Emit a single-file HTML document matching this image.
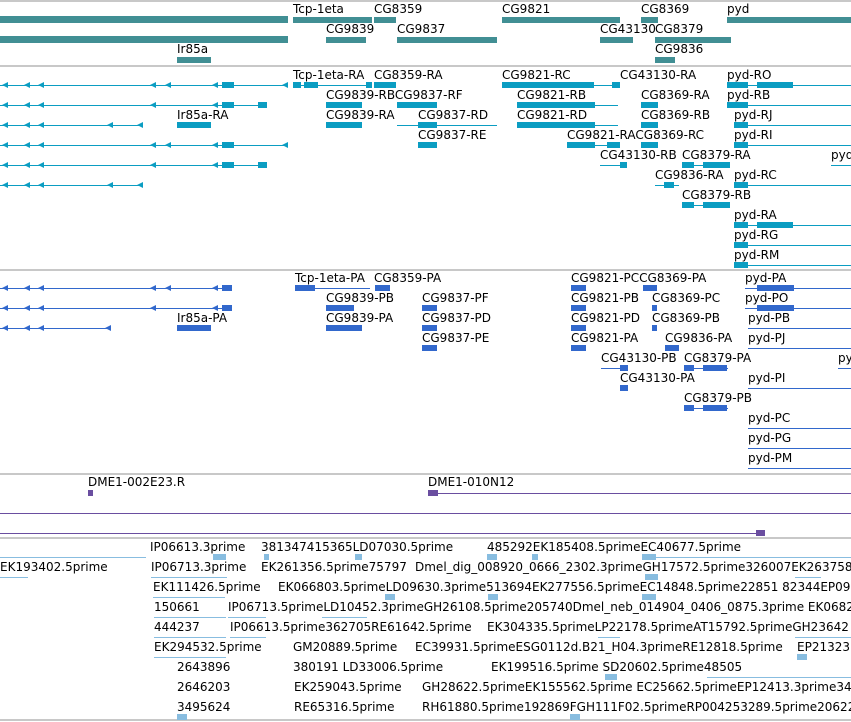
<!DOCTYPE html>
<html><head><meta charset="utf-8"><style>
body{margin:0;width:851px;height:722px;overflow:hidden;background:#fff;position:relative;font-family:"DejaVu Sans","Liberation Sans",sans-serif;}
div{position:absolute}
.t{font-size:12px;line-height:12px;white-space:pre;color:#000}
.g{background:#c8c8c8;height:2px;left:0;width:851px}
.G{background:#418f94}
.R{background:#0b9dc2}
.P{background:#3268cc}
.C{background:#6a4ea0}
.E{background:#88bde0}
.l{height:1px}
.b{height:6px}
.k{height:8px}
.a{width:0;height:0;border-top:3px solid transparent;border-bottom:3px solid transparent;border-right:6px solid #0b9dc2}
.ap{width:0;height:0;border-top:3px solid transparent;border-bottom:3px solid transparent;border-right:6px solid #3268cc}
</style></head><body>
<div class="g" style="top:0"></div>
<div class="g" style="top:65px"></div>
<div class="g" style="top:269px"></div>
<div class="g" style="top:473px"></div>
<div class="g" style="top:537px"></div>
<div class="g" style="top:719px"></div>

<!-- gene track -->
<div class="G b" style="left:0;top:16px;width:288px;height:7px"></div>
<div class="t" style="left:293px;top:3px">Tcp-1eta</div><div class="G b" style="left:293px;top:17px;width:79px"></div>
<div class="t" style="left:374px;top:3px">CG8359</div><div class="G b" style="left:374px;top:17px;width:22px"></div>
<div class="t" style="left:502px;top:3px">CG9821</div><div class="G b" style="left:502px;top:17px;width:118px"></div>
<div class="t" style="left:641px;top:3px">CG8369</div><div class="G b" style="left:641px;top:17px;width:17px"></div>
<div class="t" style="left:727px;top:3px">pyd</div><div class="G b" style="left:727px;top:17px;width:124px"></div>
<div class="G b" style="left:0;top:36px;width:288px;height:7px"></div>
<div class="t" style="left:326px;top:23px">CG9839</div><div class="G b" style="left:326px;top:37px;width:40px"></div>
<div class="t" style="left:397px;top:23px">CG9837</div><div class="G b" style="left:397px;top:37px;width:100px"></div>
<div class="t" style="left:600px;top:23px">CG43130</div><div class="G b" style="left:600px;top:37px;width:33px"></div>
<div class="t" style="left:655px;top:23px">CG8379</div><div class="G b" style="left:655px;top:37px;width:76px"></div>
<div class="t" style="left:177px;top:43px">Ir85a</div><div class="G b" style="left:177px;top:57px;width:34px"></div>
<div class="t" style="left:655px;top:43px">CG9836</div><div class="G b" style="left:655px;top:57px;width:20px"></div>

<!-- transcripts -->
<div class="R l" style="left:0;top:85px;width:288px"></div><div class="R b" style="left:222px;top:82px;width:12px"></div>
<div class="R l" style="left:0;top:105px;width:267px"></div><div class="R b" style="left:222px;top:102px;width:12px"></div><div class="R b" style="left:258px;top:102px;width:9px"></div>
<div class="R l" style="left:0;top:125px;width:143px"></div>
<div class="R l" style="left:0;top:145px;width:288px"></div><div class="R b" style="left:222px;top:142px;width:12px"></div>
<div class="R l" style="left:0;top:165px;width:267px"></div><div class="R b" style="left:222px;top:162px;width:12px"></div><div class="R b" style="left:258px;top:162px;width:9px"></div>
<div class="R l" style="left:0;top:185px;width:143px"></div>
<div class="a" style="left:2px;top:82px"></div><div class="a" style="left:24px;top:82px"></div><div class="a" style="left:38px;top:82px"></div><div class="a" style="left:150px;top:82px"></div><div class="a" style="left:165px;top:82px"></div><div class="a" style="left:212px;top:82px"></div><div class="a" style="left:282px;top:82px"></div>
<div class="a" style="left:2px;top:102px"></div><div class="a" style="left:24px;top:102px"></div><div class="a" style="left:38px;top:102px"></div><div class="a" style="left:150px;top:102px"></div><div class="a" style="left:212px;top:102px"></div>
<div class="a" style="left:2px;top:122px"></div><div class="a" style="left:24px;top:122px"></div><div class="a" style="left:38px;top:122px"></div><div class="a" style="left:107px;top:122px"></div><div class="a" style="left:137px;top:122px"></div>
<div class="a" style="left:2px;top:142px"></div><div class="a" style="left:24px;top:142px"></div><div class="a" style="left:38px;top:142px"></div><div class="a" style="left:150px;top:142px"></div><div class="a" style="left:165px;top:142px"></div><div class="a" style="left:212px;top:142px"></div><div class="a" style="left:282px;top:142px"></div>
<div class="a" style="left:2px;top:162px"></div><div class="a" style="left:24px;top:162px"></div><div class="a" style="left:38px;top:162px"></div><div class="a" style="left:150px;top:162px"></div><div class="a" style="left:212px;top:162px"></div>
<div class="a" style="left:2px;top:182px"></div><div class="a" style="left:24px;top:182px"></div><div class="a" style="left:38px;top:182px"></div><div class="a" style="left:107px;top:182px"></div><div class="a" style="left:137px;top:182px"></div>

<div class="t" style="left:293px;top:69px">Tcp-1eta-RA</div><div class="R l" style="left:293px;top:85px;width:79px"></div><div class="R b" style="left:293px;top:82px;width:8px"></div><div class="R b" style="left:304px;top:82px;width:14px"></div><div class="R b" style="left:366px;top:82px;width:6px"></div>
<div class="t" style="left:374px;top:69px">CG8359-RA</div><div class="R b" style="left:374px;top:82px;width:22px"></div>
<div class="t" style="left:502px;top:69px">CG9821-RC</div><div class="R l" style="left:502px;top:85px;width:118px"></div><div class="R b" style="left:502px;top:82px;width:92px"></div><div class="R b" style="left:612px;top:82px;width:8px"></div>
<div class="t" style="left:620px;top:69px">CG43130-RA</div>
<div class="t" style="left:727px;top:69px">pyd-RO</div><div class="R l" style="left:727px;top:85px;width:124px"></div><div class="R b" style="left:727px;top:82px;width:21px"></div><div class="R b" style="left:757px;top:82px;width:36px"></div>

<div class="t" style="left:326px;top:89px">CG9839-RBCG9837-RF</div><div class="R b" style="left:326px;top:102px;width:36px"></div><div class="R b" style="left:397px;top:102px;width:40px"></div>
<div class="t" style="left:517px;top:89px">CG9821-RB</div><div class="R l" style="left:517px;top:105px;width:101px"></div><div class="R b" style="left:517px;top:102px;width:78px"></div>
<div class="t" style="left:641px;top:89px">CG8369-RA</div><div class="R b" style="left:641px;top:102px;width:17px"></div>
<div class="t" style="left:727px;top:89px">pyd-RB</div><div class="R l" style="left:727px;top:105px;width:124px"></div><div class="R b" style="left:727px;top:102px;width:21px"></div>

<div class="t" style="left:177px;top:109px">Ir85a-RA</div><div class="R b" style="left:177px;top:122px;width:34px"></div>
<div class="t" style="left:326px;top:109px">CG9839-RA</div><div class="R b" style="left:326px;top:122px;width:36px"></div>
<div class="t" style="left:418px;top:109px">CG9837-RD</div><div class="R l" style="left:397px;top:125px;width:100px"></div><div class="R b" style="left:418px;top:122px;width:19px"></div>
<div class="t" style="left:517px;top:109px">CG9821-RD</div><div class="R l" style="left:517px;top:125px;width:101px"></div><div class="R b" style="left:517px;top:122px;width:78px"></div>
<div class="t" style="left:641px;top:109px">CG8369-RB</div><div class="R b" style="left:641px;top:122px;width:17px"></div>
<div class="t" style="left:734px;top:109px">pyd-RJ</div><div class="R l" style="left:734px;top:125px;width:117px"></div><div class="R b" style="left:734px;top:122px;width:14px"></div>

<div class="t" style="left:418px;top:129px">CG9837-RE</div><div class="R b" style="left:418px;top:142px;width:19px"></div>
<div class="t" style="left:567px;top:129px">CG9821-RACG8369-RC</div><div class="R l" style="left:567px;top:145px;width:53px"></div><div class="R b" style="left:567px;top:142px;width:28px"></div><div class="R b" style="left:607px;top:142px;width:13px"></div><div class="R b" style="left:641px;top:142px;width:17px"></div>
<div class="t" style="left:734px;top:129px">pyd-RI</div><div class="R l" style="left:734px;top:145px;width:117px"></div><div class="R b" style="left:734px;top:142px;width:14px"></div>

<div class="t" style="left:600px;top:149px">CG43130-RB</div><div class="R l" style="left:600px;top:165px;width:27px"></div><div class="R b" style="left:620px;top:162px;width:7px"></div>
<div class="t" style="left:682px;top:149px">CG8379-RA</div><div class="R l" style="left:682px;top:165px;width:48px"></div><div class="R b" style="left:682px;top:162px;width:12px"></div><div class="R b" style="left:703px;top:162px;width:27px"></div>
<div class="t" style="left:831px;top:149px">pyd</div><div class="R l" style="left:831px;top:165px;width:20px"></div>

<div class="t" style="left:655px;top:169px">CG9836-RA</div><div class="R l" style="left:655px;top:185px;width:24px"></div><div class="R b" style="left:664px;top:182px;width:10px"></div>
<div class="t" style="left:734px;top:169px">pyd-RC</div><div class="R l" style="left:734px;top:185px;width:117px"></div><div class="R b" style="left:734px;top:182px;width:14px"></div>
<div class="t" style="left:682px;top:189px">CG8379-RB</div><div class="R l" style="left:682px;top:205px;width:48px"></div><div class="R b" style="left:682px;top:202px;width:12px"></div><div class="R b" style="left:703px;top:202px;width:27px"></div>
<div class="t" style="left:734px;top:209px">pyd-RA</div><div class="R l" style="left:734px;top:225px;width:117px"></div><div class="R b" style="left:734px;top:222px;width:14px"></div><div class="R b" style="left:757px;top:222px;width:36px"></div>
<div class="t" style="left:734px;top:229px">pyd-RG</div><div class="R l" style="left:734px;top:245px;width:117px"></div><div class="R b" style="left:734px;top:242px;width:14px"></div>
<div class="t" style="left:734px;top:249px">pyd-RM</div><div class="R l" style="left:734px;top:265px;width:117px"></div><div class="R b" style="left:734px;top:262px;width:14px"></div>

<!-- proteins -->
<div class="P l" style="left:0;top:288px;width:231px"></div><div class="P b" style="left:222px;top:285px;width:10px"></div>
<div class="P l" style="left:0;top:308px;width:231px"></div><div class="P b" style="left:222px;top:305px;width:10px"></div>
<div class="P l" style="left:0;top:328px;width:110px"></div>
<div class="ap" style="left:2px;top:285px"></div><div class="ap" style="left:24px;top:285px"></div><div class="ap" style="left:38px;top:285px"></div><div class="ap" style="left:150px;top:285px"></div><div class="ap" style="left:165px;top:285px"></div><div class="ap" style="left:212px;top:285px"></div>
<div class="ap" style="left:2px;top:305px"></div><div class="ap" style="left:24px;top:305px"></div><div class="ap" style="left:38px;top:305px"></div><div class="ap" style="left:150px;top:305px"></div><div class="ap" style="left:212px;top:305px"></div>
<div class="ap" style="left:2px;top:325px"></div><div class="ap" style="left:24px;top:325px"></div><div class="ap" style="left:38px;top:325px"></div><div class="ap" style="left:105px;top:325px"></div>
<div class="t" style="left:295px;top:272px">Tcp-1eta-PA</div><div class="P l" style="left:295px;top:288px;width:75px"></div><div class="P b" style="left:295px;top:285px;width:20px"></div>
<div class="t" style="left:374px;top:272px">CG8359-PA</div><div class="P b" style="left:375px;top:285px;width:15px"></div>
<div class="t" style="left:571px;top:272px">CG9821-PCCG8369-PA</div><div class="P b" style="left:571px;top:285px;width:15px"></div><div class="P b" style="left:643px;top:285px;width:14px"></div>
<div class="t" style="left:745px;top:272px">pyd-PA</div><div class="P l" style="left:745px;top:288px;width:106px"></div><div class="P b" style="left:757px;top:285px;width:37px"></div>

<div class="t" style="left:326px;top:292px">CG9839-PB</div><div class="P b" style="left:326px;top:305px;width:28px"></div>
<div class="t" style="left:422px;top:292px">CG9837-PF</div><div class="P b" style="left:422px;top:305px;width:15px"></div>
<div class="t" style="left:571px;top:292px">CG9821-PB</div><div class="P b" style="left:571px;top:305px;width:15px"></div>
<div class="t" style="left:652px;top:292px">CG8369-PC</div><div class="P b" style="left:652px;top:305px;width:5px"></div>
<div class="t" style="left:745px;top:292px">pyd-PO</div><div class="P l" style="left:745px;top:308px;width:106px"></div><div class="P b" style="left:757px;top:305px;width:37px"></div>

<div class="t" style="left:177px;top:312px">Ir85a-PA</div><div class="P b" style="left:177px;top:325px;width:34px"></div>
<div class="t" style="left:326px;top:312px">CG9839-PA</div><div class="P b" style="left:326px;top:325px;width:36px"></div>
<div class="t" style="left:422px;top:312px">CG9837-PD</div><div class="P b" style="left:422px;top:325px;width:15px"></div>
<div class="t" style="left:571px;top:312px">CG9821-PD</div><div class="P b" style="left:571px;top:325px;width:15px"></div>
<div class="t" style="left:652px;top:312px">CG8369-PB</div><div class="P b" style="left:652px;top:325px;width:5px"></div>
<div class="t" style="left:748px;top:312px">pyd-PB</div><div class="P l" style="left:748px;top:328px;width:103px"></div>

<div class="t" style="left:422px;top:332px">CG9837-PE</div><div class="P b" style="left:422px;top:345px;width:15px"></div>
<div class="t" style="left:571px;top:332px">CG9821-PA</div><div class="P b" style="left:571px;top:345px;width:15px"></div>
<div class="t" style="left:665px;top:332px">CG9836-PA</div><div class="P b" style="left:665px;top:345px;width:14px"></div>
<div class="t" style="left:748px;top:332px">pyd-PJ</div><div class="P l" style="left:748px;top:348px;width:103px"></div>

<div class="t" style="left:601px;top:352px">CG43130-PB</div><div class="P l" style="left:601px;top:368px;width:27px"></div><div class="P b" style="left:620px;top:365px;width:8px"></div>
<div class="t" style="left:684px;top:352px">CG8379-PA</div><div class="P l" style="left:684px;top:368px;width:44px"></div><div class="P b" style="left:684px;top:365px;width:10px"></div><div class="P b" style="left:703px;top:365px;width:24px"></div>
<div class="t" style="left:838px;top:352px">py</div><div class="P l" style="left:838px;top:368px;width:13px"></div>
<div class="t" style="left:620px;top:372px">CG43130-PA</div><div class="P b" style="left:620px;top:385px;width:8px"></div>
<div class="t" style="left:748px;top:372px">pyd-PI</div><div class="P l" style="left:748px;top:388px;width:103px"></div>
<div class="t" style="left:684px;top:392px">CG8379-PB</div><div class="P l" style="left:684px;top:408px;width:44px"></div><div class="P b" style="left:684px;top:405px;width:10px"></div><div class="P b" style="left:703px;top:405px;width:24px"></div>
<div class="t" style="left:748px;top:412px">pyd-PC</div><div class="P l" style="left:748px;top:428px;width:103px"></div>
<div class="t" style="left:748px;top:432px">pyd-PG</div><div class="P l" style="left:748px;top:448px;width:103px"></div>
<div class="t" style="left:748px;top:452px">pyd-PM</div><div class="P l" style="left:748px;top:468px;width:103px"></div>

<!-- clones -->
<div class="t" style="left:88px;top:476px">DME1-002E23.R</div><div class="C b" style="left:88px;top:490px;width:5px"></div>
<div class="t" style="left:428px;top:476px">DME1-010N12</div><div class="C l" style="left:428px;top:493px;width:423px"></div><div class="C b" style="left:428px;top:490px;width:10px"></div>
<div class="C l" style="left:0;top:513px;width:851px"></div>
<div class="C l" style="left:0;top:533px;width:765px"></div><div class="C b" style="left:756px;top:530px;width:9px"></div>

<!-- ESTs -->
<div class="t" style="left:150px;top:541px">IP06613.3prime</div>
<div class="t" style="left:261px;top:541px">381347415365LD07030.5prime</div>
<div class="t" style="left:487px;top:541px">485292EK185408.5primeEC40677.5prime</div>
<div class="E l" style="left:0;top:557px;width:146px"></div><div class="E b" style="left:213px;top:554px;width:13px"></div>
<div class="E b" style="left:264px;top:554px;width:5px"></div><div class="E b" style="left:355px;top:554px;width:7px"></div>
<div class="E l" style="left:642px;top:557px;width:209px"></div><div class="E b" style="left:487px;top:554px;width:10px"></div><div class="E b" style="left:532px;top:554px;width:6px"></div><div class="E b" style="left:642px;top:554px;width:14px"></div>

<div class="t" style="left:0;top:561px">EK193402.5prime</div><div class="E l" style="left:0;top:577px;width:28px"></div>
<div class="t" style="left:151px;top:561px">IP06713.3prime</div><div class="E l" style="left:151px;top:577px;width:76px"></div>
<div class="t" style="left:261px;top:561px">EK261356.5prime75797</div>
<div class="t" style="left:415px;top:561px">Dmel_dig_008920_0666_2302.3primeGH17572.5prime326007EK263758</div>
<div class="E b" style="left:645px;top:574px;width:13px"></div>
<div class="E l" style="left:795px;top:577px;width:26px"></div>

<div class="t" style="left:153px;top:581px">EK111426.5prime</div><div class="E l" style="left:153px;top:597px;width:72px"></div>
<div class="t" style="left:278px;top:581px">EK066803.5primeLD09630.3prime513694EK277556.5primeEC14848.5prime22851 82344EP09</div>
<div class="E b" style="left:385px;top:594px;width:10px"></div><div class="E b" style="left:488px;top:594px;width:10px"></div><div class="E b" style="left:642px;top:594px;width:14px"></div>

<div class="t" style="left:154px;top:601px">150661</div><div class="E l" style="left:154px;top:617px;width:72px"></div>
<div class="t" style="left:228px;top:601px">IP06713.5primeLD10452.3primeGH26108.5prime205740Dmel_neb_014904_0406_0875.3prime EK0682</div>
<div class="E l" style="left:228px;top:617px;width:38px"></div><div class="E l" style="left:322px;top:617px;width:45px"></div>

<div class="t" style="left:154px;top:621px">444237</div><div class="E l" style="left:154px;top:637px;width:72px"></div>
<div class="t" style="left:230px;top:621px">IP06613.5prime362705RE61642.5prime</div><div class="E l" style="left:230px;top:637px;width:36px"></div>
<div class="t" style="left:487px;top:621px">EK304335.5primeLP22178.5primeAT15792.5primeGH23642</div>
<div class="E l" style="left:598px;top:637px;width:22px"></div><div class="E l" style="left:795px;top:637px;width:56px"></div>

<div class="t" style="left:154px;top:641px">EK294532.5prime</div><div class="E l" style="left:154px;top:657px;width:72px"></div>
<div class="t" style="left:293px;top:641px">GM20889.5prime</div>
<div class="t" style="left:415px;top:641px">EC39931.5primeESG0112d.B21_H04.3primeRE12818.5prime</div>
<div class="t" style="left:797px;top:641px">EP21323</div><div class="E b" style="left:797px;top:654px;width:10px"></div>

<div class="t" style="left:177px;top:661px">2643896</div>
<div class="t" style="left:293px;top:661px">380191 LD33006.5prime</div>
<div class="t" style="left:491px;top:661px">EK199516.5prime SD20602.5prime48505</div>
<div class="E l" style="left:707px;top:677px;width:144px"></div><div class="E b" style="left:605px;top:674px;width:12px"></div>

<div class="t" style="left:177px;top:681px">2646203</div>
<div class="t" style="left:294px;top:681px">EK259043.5prime</div>
<div class="t" style="left:422px;top:681px">GH28622.5primeEK155562.5prime EC25662.5primeEP12413.3prime34</div>

<div class="t" style="left:177px;top:701px">3495624</div><div class="E b" style="left:177px;top:714px;width:10px"></div>
<div class="t" style="left:294px;top:701px">RE65316.5prime</div>
<div class="t" style="left:422px;top:701px">RH61880.5prime192869FGH111F02.5primeRP004253289.5prime20622</div>
<div class="E b" style="left:570px;top:714px;width:10px"></div>
</body></html>
